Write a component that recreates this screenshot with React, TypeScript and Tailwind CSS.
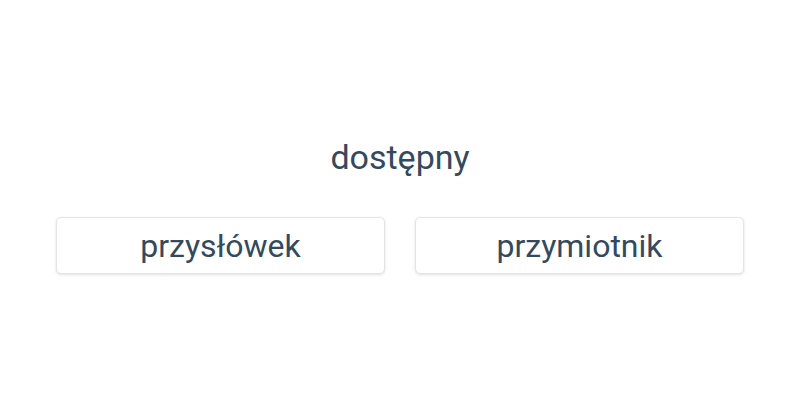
export default function App() {
  const options = ['przysłówek', 'przymiotnik'];
  return (
    <div className="h-[400px] w-[800px] bg-white text-[#34495e]" style={{ fontFamily: 'Roboto, "Noto Sans", sans-serif' }}>
      <div className="pt-[136px] text-center text-[34px] leading-[42px]">dostępny</div>
      <div className="mt-[39px] grid grid-cols-2 gap-[30px] px-[56px]">
        {options.map(o => (
          <button
            key={o}
            className="h-[57px] rounded-[5px] border border-[#e4e4e4] bg-white text-[32px] leading-none text-[#34495e] shadow-[0_1px_3px_rgba(0,0,0,0.12)]"
          >
            {o}
          </button>
        ))}
      </div>
    </div>
  );
}
